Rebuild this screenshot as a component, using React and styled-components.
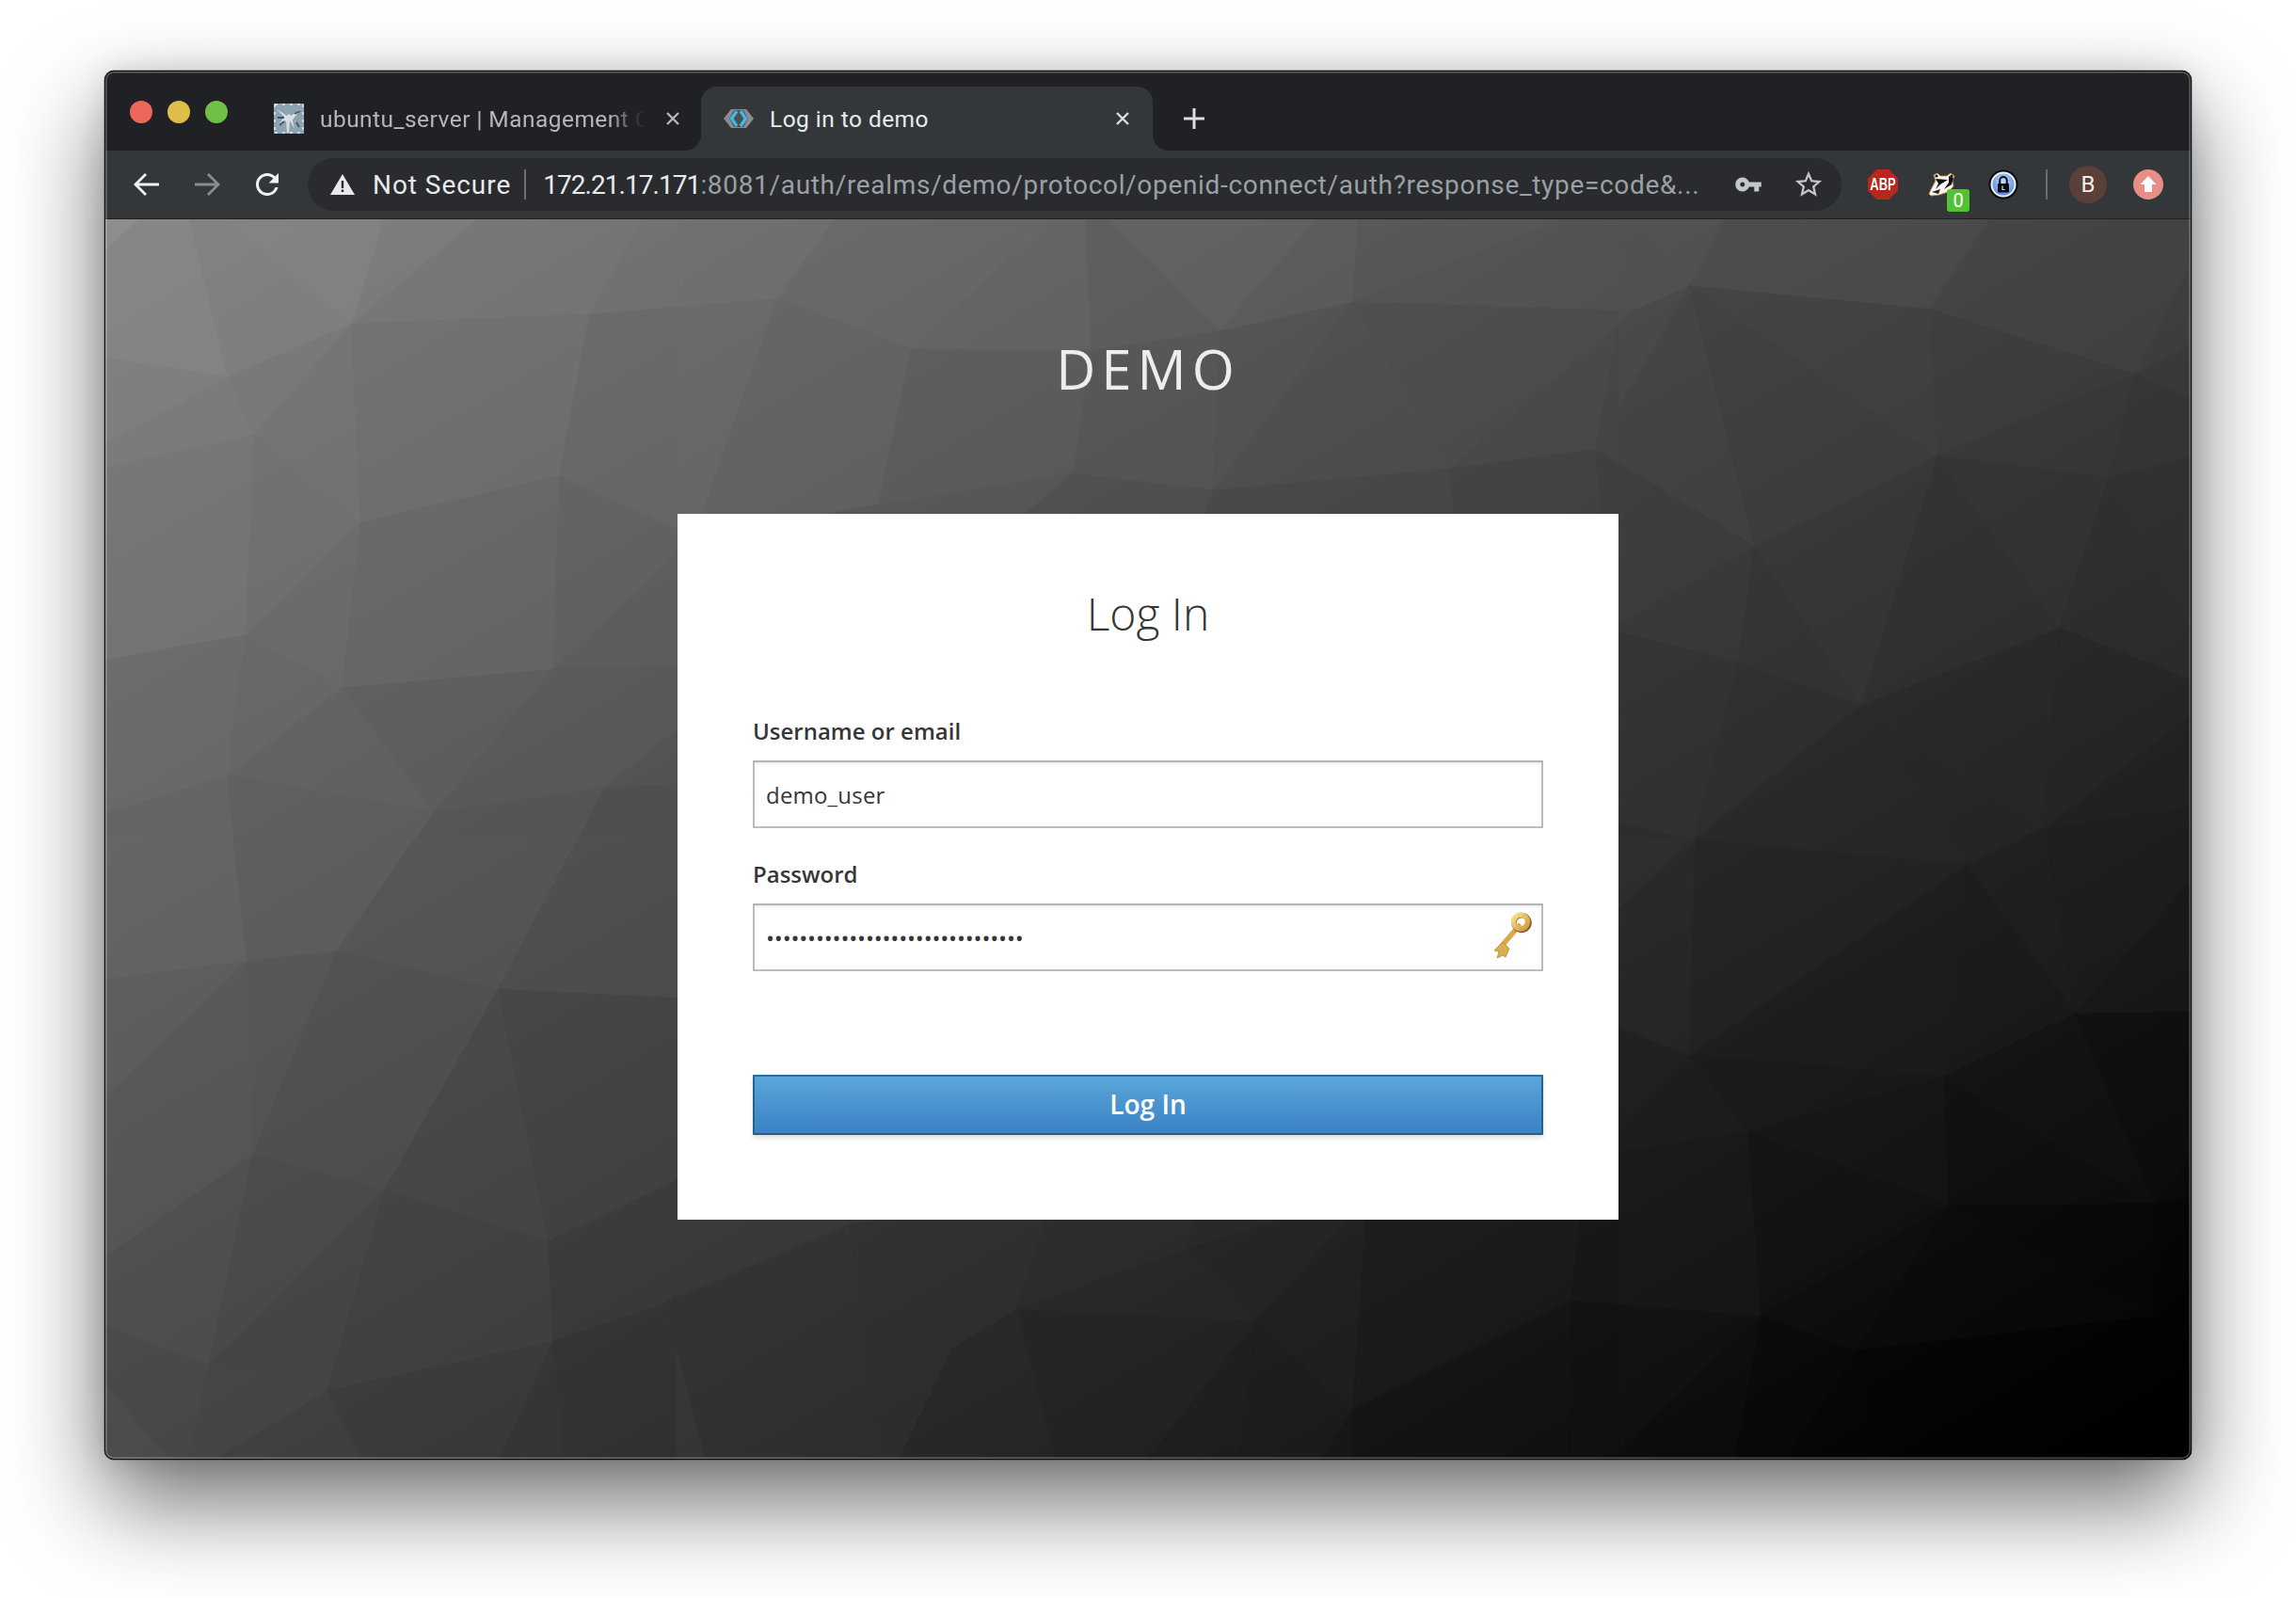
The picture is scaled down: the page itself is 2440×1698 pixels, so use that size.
import React from 'react';
import styled, { createGlobalStyle } from 'styled-components';

const Global = createGlobalStyle`
  html, body { margin: 0; padding: 0; background: #fff; }
  body { width: 2440px; height: 1698px; overflow: hidden; }
  * { box-sizing: border-box; }
`;

const Page = styled.div`
  width: 2440px;
  height: 1698px;
  padding: 75px 0 0 111px;
  background: #fff;
`;
const Win = styled.div`
  position: relative;
  width: 2218px;
  height: 1476px;
  display: flex;
  flex-direction: column;
  border-radius: 10px;
  background: #202124;
  box-shadow: 0 0 0 0.5px rgba(0,0,0,.5), 0 44px 100px rgba(0,0,0,.58), 0 0 30px rgba(0,0,0,.12);
  &::after {
    content: '';
    position: absolute;
    inset: 0;
    border-radius: 10px;
    border: 1px solid #0c0c0c;
    box-shadow: inset 0 0 0 1.5px rgba(255,255,255,.28);
    pointer-events: none;
    z-index: 5;
  }
`;
const TabStrip = styled.div`
  height: 85px;
  flex: none;
  display: flex;
  padding: 17px 0 0 27px;
  border-radius: 10px 10px 0 0;
  font-family: Roboto, "Liberation Sans", sans-serif;
  font-size: 24.5px;
`;
const Lights = styled.div`
  display: flex;
  gap: 16px;
  margin-right: 23px;
  padding-top: 15px;
`;
const Light = styled.span`
  width: 24px;
  height: 24px;
  border-radius: 50%;
  background: ${p => p.$c};
`;
const Tab = styled.div`
  position: relative;
  width: 480px;
  height: 68px;
  display: flex;
  align-items: center;
  gap: 17px;
  padding: 0 ${p => (p.$active ? 20 : 18)}px 0 ${p => (p.$active ? 24 : 26)}px;
  border-radius: 16px 16px 0 0;
  color: ${p => (p.$active ? '#e8eaed' : '#b4b7bb')};
  background: ${p => (p.$active ? '#33373a' : 'transparent')};
  ${p => p.$active && `
    &::before, &::after {
      content: '';
      position: absolute;
      bottom: 0;
      width: 16px;
      height: 16px;
    }
    &::before { left: -16px; background: radial-gradient(circle at 0 0, transparent 15.5px, #33373a 16px); }
    &::after { right: -16px; background: radial-gradient(circle at 100% 0, transparent 15.5px, #33373a 16px); }
  `}
`;
const TabTitle = styled.div`
  flex: 1;
  min-width: 0;
  white-space: nowrap;
  letter-spacing: 0.45px;
  ${p => p.$fade && `mask-image: linear-gradient(to right, #000 89%, rgba(0,0,0,.25) 96%, transparent 100%);`}
`;
const Favicon = styled.svg`
  flex: none;
  width: 32px;
  height: 32px;
`;
const CloseIcon = styled.svg`
  flex: none;
  width: 24px;
  height: 24px;
`;
const NewTab = styled.svg`
  flex: none;
  width: 32px;
  height: 32px;
  margin: 18px 0 0 28px;
`;
const Toolbar = styled.div`
  height: 73px;
  flex: none;
  display: flex;
  align-items: center;
  padding-left: 27px;
  background: #33373a;
  border-bottom: 1px solid #1d1f21;
  font-family: Roboto, "Liberation Sans", sans-serif;
`;
const NavGroup = styled.div`
  display: flex;
  align-items: center;
  gap: 28px;
`;
const NavIcon = styled.svg`
  width: 36px;
  height: 36px;
  flex: none;
`;
const Omnibox = styled.div`
  margin-left: 25px;
  width: 1630px;
  height: 56px;
  flex: none;
  display: flex;
  align-items: center;
  padding: 0 18px 0 24px;
  border-radius: 28px;
  background: #292b2e;
  font-size: 28px;
`;
const WarnIcon = styled.svg`
  width: 26px;
  height: 22px;
  flex: none;
`;
const Security = styled.span`
  margin-left: 19px;
  color: #e8eaed;
  white-space: nowrap;
  letter-spacing: 0.95px;
`;
const UrlDivider = styled.span`
  width: 2px;
  height: 32px;
  margin: 0 18px 0 14px;
  background: #6a6d70;
  flex: none;
`;
const Url = styled.div`
  flex: 1;
  min-width: 0;
  white-space: nowrap;
  color: #9aa0a6;
  letter-spacing: 0.68px;
`;
const Host = styled.span`
  color: #e8eaed;
  letter-spacing: -0.95px;
`;
const OmniIcon = styled.svg`
  width: ${p => p.$s}px;
  height: ${p => p.$s}px;
  margin-left: ${p => p.$ml}px;
  flex: none;
  fill: #c4c7ca;
`;
const Exts = styled.div`
  display: flex;
  align-items: center;
  margin-left: 28px;
`;
const ExtSlot = styled.div`
  position: relative;
  width: 32px;
  height: 32px;
  margin-right: 32px;
  flex: none;
  display: flex;
  align-items: center;
  justify-content: center;
`;
const AbpLabel = styled.span`
  position: absolute;
  inset: 0;
  display: flex;
  align-items: center;
  justify-content: center;
  color: #fff;
  font: bold 18px/1 "Liberation Sans", sans-serif;
  transform: scaleX(.72);
`;
const Count = styled.span`
  position: absolute;
  left: 20px;
  top: 21px;
  width: 24px;
  height: 24px;
  border-radius: 3px;
  background: #52c234;
  color: #fff;
  font-size: 20px;
  line-height: 25px;
  text-align: center;
`;
const ToolDivider = styled.span`
  width: 2px;
  height: 32px;
  margin: 0 23px 0 -3px;
  background: #6a6d70;
  flex: none;
`;
const Avatar = styled.span`
  width: 40px;
  height: 40px;
  border-radius: 50%;
  margin-right: 28px;
  background: #5b4037;
  color: #f1ece9;
  font-size: 24px;
  display: flex;
  align-items: center;
  justify-content: center;
  flex: none;
`;
const Update = styled.svg`
  width: 32px;
  height: 32px;
  flex: none;
`;
const Viewport = styled.div`
  position: relative;
  flex: 1;
  min-height: 0;
  display: flex;
  flex-direction: column;
  align-items: center;
  overflow: hidden;
  background: #333;
  border-radius: 0 0 10px 10px;
  font-family: "Open Sans", "Liberation Sans", sans-serif;
`;
const Backdrop = styled.svg`
  position: absolute;
  inset: 0;
  width: 100%;
  height: 100%;
`;
const Realm = styled.div`
  position: relative;
  height: 313px;
  padding-top: 119px;
  font-size: 58px;
  line-height: 80px;
  letter-spacing: 6px;
  color: #ededed;
  text-transform: uppercase;
`;
const Card = styled.div`
  position: relative;
  width: 1000px;
  height: 750px;
  padding: 73px 80px 0;
  background: #fff;
`;
const Title = styled.h1`
  margin: 0 0 75px;
  font-size: 48px;
  font-weight: 300;
  line-height: 66px;
  text-align: center;
  color: #363636;
`;
const Field = styled.div`
  position: relative;
  display: flex;
  flex-direction: column;
  margin-bottom: 32px;
`;
const Label = styled.label`
  font-size: 24px;
  font-weight: 600;
  line-height: 34px;
  margin-bottom: 14px;
  color: #363636;
`;
const Input = styled.input`
  width: 840px;
  height: 72px;
  padding: 0 12px;
  border: 2px solid #bbb;
  border-top-color: #b5b5b5;
  background: #fff;
  box-shadow: inset 0 2px 2px rgba(3,3,3,.06);
  font-family: "Open Sans", sans-serif;
  font-size: 24px;
  letter-spacing: ${p => (p.type === 'password' ? '-0.2px' : '0.2px')};
  color: #363636;
  outline: none;
`;
const KeyArt = styled.svg`
  position: absolute;
  right: 12px;
  bottom: 11px;
  width: 42px;
  height: 52px;
`;
const Submit = styled.button`
  display: block;
  width: 840px;
  height: 64px;
  margin-top: 110px;
  padding: 0 0 2px;
  border: 2px solid #27628f;
  border-top-color: #2c6aa0;
  border-bottom-color: #265e94;
  border-radius: 1px;
  background: linear-gradient(to bottom, #5ba6d9 0%, #3a82c4 100%);
  box-shadow: 0 3px 5px rgba(3,3,3,.14);
  color: #fff;
  font-family: "Open Sans", sans-serif;
  font-size: 28px;
  font-weight: 600;
`;

const regions = [
  { x: 111, y: 233, w: 610, h: 660, zw: 1568, zh: 1568, polys: [
    ['0,0 95,0 0,80','#8f8f8f'],['95,0 232,0 338,398 0,350 0,80','#858585'],['232,0 330,0 675,265 338,398','#7e7e7e'],['330,0 765,0 675,265','#828282'],['765,0 1020,0 675,265','#7a7a7a'],['1020,0 1470,0 1325,240 675,265','#737373'],['1470,0 1568,0 1568,222 1325,240','#6e6e6e'],['0,350 338,398 0,570','#7e7e7e'],['0,570 338,398 410,545 0,628','#797979'],['338,398 675,265 410,545','#767676'],['675,265 700,765 410,545','#717171'],['675,265 1325,240 1243,648 700,765','#6c6c6c'],['1325,240 1568,222 1568,785 1243,648','#656565'],['0,628 410,545 385,1050 0,1112','#747474'],['410,545 700,765 385,1050','#6f6f6f'],['700,765 650,1183 385,1050','#696969'],['700,765 1243,648 1225,1137 650,1183','#646464'],['1243,648 1568,785 1568,840 1225,1137','#5e5e5e'],['1568,840 1568,1125 1225,1137','#5a5a5a'],['0,1112 385,1050 335,1405 0,1500','#6a6a6a'],['385,1050 650,1183 335,1405','#666666'],['650,1183 900,1497 335,1405','#606060'],['650,1183 1225,1137 900,1497','#5b5b5b'],['1225,1137 1568,1125 1568,1285 1365,1435 900,1497','#565656'],['1568,1285 1568,1425 1365,1435','#505050'],['0,1500 335,1405 355,1568 0,1568','#636363'],['335,1405 900,1497 850,1568 355,1568','#5c5c5c'],['900,1497 1365,1435 1295,1568 850,1568','#525252'],['1365,1435 1568,1425 1568,1568 1295,1568','#4a4a4a'],
  ]},
  { x: 111, y: 890, w: 610, h: 660, zw: 1568, zh: 1568, polys: [
    ['0,0 352,0 390,312 0,358','#646464'],['352,0 850,0 635,287 390,312','#5c5c5c'],['850,0 1295,0 1075,383 635,287','#535353'],['1295,0 1568,0 1568,405 1075,383','#4b4b4b'],['0,358 390,312 0,655','#5e5e5e'],['0,655 390,312 405,800 0,1060','#575757'],['390,312 635,287 405,800','#555555'],['635,287 1075,383 765,890 405,800','#4e4e4e'],['1075,383 1213,1020 765,890','#454545'],['1075,383 1568,405 1568,862 1213,1020','#404040'],['0,1060 405,800 285,1332 0,1235','#505050'],['405,800 765,890 285,1332','#494949'],['765,890 610,1397 285,1332','#454545'],['765,890 1213,1020 1225,1272 610,1397','#3f3f3f'],['1213,1020 1568,862 1568,1150 1525,1178 1225,1272','#383838'],['1525,1178 1568,1150 1568,1300','#2e2e2e'],['0,1235 285,1332 228,1568 175,1568 0,1380','#4a4a4a'],['0,1380 175,1568 0,1568','#505050'],['285,1332 610,1397 310,1568 228,1568','#464646'],['610,1397 705,1568 310,1568','#3f3f3f'],['610,1397 1225,1272 1080,1568 705,1568','#393939'],['1225,1272 1255,1568 1080,1568','#333333'],['1225,1272 1525,1178 1568,1300 1568,1568 1255,1568','#303030'],
  ]},
  { x: 1720, y: 233, w: 610, h: 660, zw: 1568, zh: 1568, polys: [
    ['0,0 60,0 195,168 45,230 0,228','#4e4e4e'],['60,0 285,0 195,168','#505050'],['285,0 1015,0 850,227 195,168','#4a4a4a'],['1015,0 1568,0 1568,125 1410,390 850,227','#424242'],['1568,110 1568,315 1410,390','#3c3c3c'],['0,228 45,230 0,265','#4a4a4a'],['45,230 195,168 0,480 0,265','#444444'],['195,168 372,827 0,615 0,480','#3e3e3e'],['195,168 872,597 372,827','#393939'],['195,168 850,227 872,597','#3d3d3d'],['850,227 1410,390 872,597','#393939'],['1410,390 1345,652 872,597','#343434'],['1410,390 1568,315 1568,455','#363636'],['1410,390 1568,455 1568,600 1340,652','#313131'],['0,615 372,827 0,1022','#373737'],['0,1022 372,827 327,1120 0,1042','#343434'],['372,827 662,1228 327,1120','#2f2f2f'],['372,827 872,597 662,1228','#333333'],['872,597 1205,1032 662,1228','#2d2d2d'],['872,597 1340,652 1205,1032','#303030'],['1340,652 1568,1040 1568,1165 1205,1032','#2a2a2a'],['1340,652 1568,600 1568,1040','#2c2c2c'],['0,1042 327,1120 205,1568 0,1525','#2e2e2e'],['0,1525 205,1568 0,1568','#282828'],['327,1120 662,1228 205,1568','#2a2a2a'],['205,1568 662,1228 910,1568','#252525'],['662,1228 1160,1540 1080,1568 910,1568','#222222'],['662,1228 1205,1032 1160,1540','#252525'],['1205,1032 1568,1165 1568,1250 1160,1540','#222222'],['1568,1250 1568,1485 1160,1540','#1e1e1e'],['1160,1540 1568,1485 1568,1568 1080,1568','#1b1b1b'],
  ]},
  { x: 1720, y: 890, w: 610, h: 660, zw: 1568, zh: 1568, polys: [
    ['0,0 210,5 0,180','#2b2b2b'],['210,0 900,0 950,68 210,5','#252525'],['900,0 1110,0 950,68','#222222'],['1110,0 1170,0 1248,445 950,68','#1c1c1c'],['1170,0 1568,0 1568,105 1248,445','#1a1a1a'],['1568,105 1568,440 1248,445','#151515'],['950,68 1248,445 890,603','#171717'],['950,68 890,603 190,550','#191919'],['210,5 950,68 190,550','#202020'],['0,180 210,5 190,550 0,480','#242424'],['0,480 190,550 0,730','#1c1c1c'],['0,730 190,550 355,743 0,795','#191919'],['190,550 890,603 355,743','#151515'],['355,743 890,603 903,928','#131313'],['890,603 1465,925 903,928','#0c0c0c'],['890,603 1248,445 1465,925','#0f0f0f'],['1248,445 1568,440 1568,805 1465,925','#0b0b0b'],['1465,925 1568,805 1568,905','#070707'],['0,795 355,743 390,1208 0,1180','#151515'],['355,743 903,928 390,1208','#0f0f0f'],['903,928 650,1295 390,1208','#0a0a0a'],['903,928 1465,1208 650,1295','#070707'],['903,928 1465,925 1465,1208','#050505'],['1465,925 1568,905 1568,1125 1465,1208','#030303'],['1465,1208 1568,1125 1568,1568 1405,1568','#000000'],['650,1295 1465,1208 1405,1568 690,1568','#000000'],['650,1295 690,1568 455,1568','#030303'],['390,1208 650,1295 455,1568 315,1568','#060606'],['0,1180 390,1208 0,1545','#101010'],['0,1545 390,1208 315,1568 0,1568','#0b0b0b'],
  ]},
  { x: 720, y: 233, w: 1000, h: 315, zw: 1568, zh: 939, polys: [
    ['0,0 262,0 167,252 0,280','#6c6c6c'],['262,0 625,0 390,412 167,252','#656565'],['625,0 680,0 690,415 390,412','#616161'],['680,0 720,0 905,355 690,415','#5a5a5a'],['720,0 1065,0 905,355','#5f5f5f'],['1065,0 1135,0 1125,262 905,355','#5a5a5a'],['1135,0 1480,0 1125,262','#535353'],['1480,0 1568,0 1568,290 1125,262','#4f4f4f'],['0,280 167,252 40,939 0,939','#666666'],['167,252 390,412 335,905 232,939 40,939','#5f5f5f'],['390,412 690,415 660,805 335,905','#585858'],['690,415 905,355 893,858 660,805','#525252'],['905,355 1125,262 893,858','#4e4e4e'],['1125,262 1287,790 893,858','#4a4a4a'],['1125,262 1568,290 1568,340 1287,790','#474747'],['1568,340 1530,730 1287,790','#444444'],['1568,340 1568,780 1530,730','#404040'],['335,905 660,805 575,939 232,939','#535353'],['660,805 893,858 878,939 575,939','#4a4a4a'],['893,858 1287,790 1295,939 878,939','#424242'],['1287,790 1530,730 1540,939 1295,939','#3c3c3c'],['1530,730 1568,780 1568,939 1540,939','#383838'],
  ]},
  { x: 720, y: 1295, w: 1000, h: 255, zw: 1568, zh: 765, polys: [
    ['0,0 340,0 285,20 0,250','#383838'],['285,20 340,0 615,0 565,290 460,412 370,765 335,765','#2e2e2e'],['0,250 285,20 335,765 45,765 0,430','#303030'],['0,430 45,765 0,765','#383838'],['615,0 860,0 850,97 565,290','#2b2b2b'],['860,0 1015,0 850,97','#272727'],['1015,0 1120,0 965,328 850,97','#222222'],['850,97 965,328 565,290','#262626'],['565,290 965,328 785,765 630,765','#212121'],['460,412 565,290 630,765 370,765','#262626'],['965,328 1125,612 1075,765 935,765','#1a1a1a'],['965,328 935,765 785,765','#1c1c1c'],['1120,0 1148,0 1125,612 965,328','#1e1e1e'],['1148,0 1505,0 1490,262 1125,612','#171717'],['1125,612 1490,262 1485,765 1125,765','#101010'],['1125,612 1125,765 1075,765','#141414'],['1505,0 1568,0 1568,275 1490,262','#131313'],['1490,262 1568,275 1568,765 1485,765','#0d0d0d'],
  ]},
];

const CloseGlyph = ({ color }) => (
  <CloseIcon viewBox="0 0 24 24"><path d="M6 6l12 12M18 6L6 18" stroke={color} strokeWidth="2.4" fill="none" /></CloseIcon>
);

export default function App() {
  return (
    <Page>
      <Global />
      <Win>
        <TabStrip>
          <Lights>
            <Light $c="#ef675c" />
            <Light $c="#e0bd49" />
            <Light $c="#70bf47" />
          </Lights>
          <Tab>
            <Favicon viewBox="0 0 32 32">
              <rect width="32" height="32" fill="#8da3b2" />
              <path d="M1 1h30M1 1v30M31 1v30M1 31h30" stroke="#e6ecef" strokeWidth="1.5" strokeDasharray="3 5" />
              <path d="M3 6l11 7 2-2 2 2 11-7-9 11 2 10-5-9-1 13h-2l-1-13-8 5 6-9z" fill="#e4e9ec" opacity=".85" />
              <path d="M4 15h7M22 11l6-3M6 23l5-4M24 20l3 5" stroke="#47535c" strokeWidth="1.8" />
            </Favicon>
            <TabTitle $fade>ubuntu_server | Management C</TabTitle>
            <CloseGlyph color="#b4b7bb" />
          </Tab>
          <Tab $active>
            <Favicon viewBox="0 0 32 32">
              <path d="M8 6h16l8 10-8 10H8L0 16z" fill="#8b8d90" />
              <path d="M11 7h10l5 9-5 9H11l-5-9z" fill="#4a4f53" />
              <path d="M14 8l-5.5 8 5.5 8" stroke="#45b6ea" strokeWidth="3.4" fill="none" />
              <path d="M18 8l5.5 8-5.5 8" stroke="#45b6ea" strokeWidth="3.4" fill="none" />
            </Favicon>
            <TabTitle>Log in to demo</TabTitle>
            <CloseGlyph color="#dcdee1" />
          </Tab>
          <NewTab viewBox="0 0 32 32"><path d="M16 5v22M5 16h22" stroke="#dcdee1" strokeWidth="3" /></NewTab>
        </TabStrip>

        <Toolbar>
          <NavGroup>
            <NavIcon viewBox="0 0 36 36"><path d="M31 18H7M17 7L6 18l11 11" stroke="#f2f3f4" strokeWidth="2.8" fill="none" /></NavIcon>
            <NavIcon viewBox="0 0 36 36"><path d="M5 18h24M19 7l11 11-11 11" stroke="#8a8d90" strokeWidth="2.8" fill="none" /></NavIcon>
            <NavIcon viewBox="0 0 24 24"><path fill="#f2f3f4" d="M17.65 6.35A7.958 7.958 0 0 0 12 4c-4.42 0-7.99 3.58-7.99 8s3.57 8 7.99 8c3.73 0 6.84-2.55 7.73-6h-2.08A5.99 5.99 0 0 1 12 18c-3.31 0-6-2.69-6-6s2.69-6 6-6c1.66 0 3.14.69 4.22 1.78L13 11h7V4l-2.35 2.35z" /></NavIcon>
          </NavGroup>
          <Omnibox>
            <WarnIcon viewBox="0 0 26 22">
              <path d="M13 0L26 22H0z" fill="#e8eaed" />
              <path d="M11.8 7h2.4v8h-2.4zM11.8 16.6h2.4V19h-2.4z" fill="#292b2e" />
            </WarnIcon>
            <Security>Not Secure</Security>
            <UrlDivider />
            <Url><Host>172.21.17.171</Host>:8081/auth/realms/demo/protocol/openid-connect/auth?response_type=code&amp;...</Url>
            <OmniIcon $s={30} $ml={0} viewBox="0 0 24 24"><path d="M12.65 10C11.83 7.67 9.61 6 7 6c-3.31 0-6 2.69-6 6s2.69 6 6 6c2.61 0 4.83-1.67 5.65-4H17v4h4v-4h2v-4H12.65zM7 14c-1.1 0-2-.9-2-2s.9-2 2-2 2 .9 2 2-.9 2-2 2z" /></OmniIcon>
            <OmniIcon $s={34} $ml={32} viewBox="0 0 24 24"><path d="M22 9.24l-7.19-.62L12 2 9.19 8.63 2 9.24l5.46 4.73L5.82 21 12 17.27 18.18 21l-1.63-7.03L22 9.24zM12 15.4l-3.76 2.27 1-4.28-3.32-2.88 4.38-.38L12 6.1l1.71 4.04 4.38.38-3.32 2.88 1 4.28L12 15.4z" /></OmniIcon>
          </Omnibox>
          <Exts>
            <ExtSlot>
              <svg width="32" height="32" viewBox="0 0 32 32"><path d="M9.5 0h13L32 9.5v13L22.5 32h-13L0 22.5v-13z" fill="#b8281c" /></svg>
              <AbpLabel>ABP</AbpLabel>
            </ExtSlot>
            <ExtSlot>
              <svg width="32" height="30" viewBox="0 0 32 30">
                <path d="M1 25C3 20 6 15 8 11L6 5l4-2 3 3h7l4-3 4 3-2 5 1 6-6 6-9 3-9 1z" fill="#f6f6f6" stroke="#d88a2c" strokeWidth=".9" />
                <path d="M8 9l13 1-8 5-5 5 3-6zM22 6l5 2-2 7-8 5 5-7z" fill="#111" />
                <path d="M4 23l9-3-2 5z" fill="#222" />
                <circle cx="9" cy="6" r="1.6" fill="#111" /><circle cx="25" cy="6" r="1.6" fill="#111" />
              </svg>
              <Count>0</Count>
            </ExtSlot>
            <ExtSlot>
              <svg width="32" height="32" viewBox="0 0 32 32">
                <defs>
                  <radialGradient id="lockBlue" cx="50%" cy="35%" r="60%"><stop offset="0" stopColor="#c9dcfa" /><stop offset="1" stopColor="#5c8fe0" /></radialGradient>
                </defs>
                <circle cx="16" cy="16" r="15.5" fill="#0a0a0a" />
                <circle cx="16" cy="16" r="13.5" fill="#eef2f8" />
                <circle cx="16" cy="16" r="11.5" fill="url(#lockBlue)" />
                <path d="M12.2 15v-3.2a3.8 3.8 0 0 1 7.6 0V15" stroke="#111" strokeWidth="2" fill="none" />
                <rect x="10" y="15" width="12" height="9.5" rx="1" fill="#0b0b14" />
                <path d="M15 17.5v4h2.6" stroke="#d6dffb" strokeWidth="1.2" fill="none" />
              </svg>
            </ExtSlot>
            <ToolDivider />
            <Avatar>B</Avatar>
            <Update viewBox="0 0 32 32">
              <circle cx="16" cy="16" r="16" fill="#e58f87" />
              <path d="M16 7l8.5 9H20v8h-8v-8H7.5z" fill="#fff" />
            </Update>
          </Exts>
        </Toolbar>

        <Viewport>
          <Backdrop viewBox="0 0 2218 1318" preserveAspectRatio="none">
            <defs>
              <linearGradient id="sheet" x1="0" y1="0" x2="1" y2="1">
                <stop offset="0" stopColor="#8c8c8c" />
                <stop offset=".5" stopColor="#474747" />
                <stop offset="1" stopColor="#000" />
              </linearGradient>
            </defs>
            <rect width="2218" height="1318" fill="url(#sheet)" />
            <g opacity=".62">
              {regions.map((r, i) => (
                <g key={i} transform={`translate(${r.x - 111} ${r.y - 233}) scale(${r.w / r.zw} ${r.h / r.zh})`}>
                  {r.polys.map(([points, fill], j) => (
                    <polygon key={j} points={points} fill={fill} stroke={fill} strokeWidth="2" strokeLinejoin="round" />
                  ))}
                </g>
              ))}
            </g>
          </Backdrop>
          <Realm>Demo</Realm>
          <Card>
            <Title>Log In</Title>
            <Field>
              <Label>Username or email</Label>
              <Input type="text" readOnly value="demo_user" />
            </Field>
            <Field>
              <Label>Password</Label>
              <Input type="password" readOnly value="xxxxxxxxxxxxxxxxxxxxxxxxxxxxxxx" />
              <KeyArt viewBox="0 0 42 52">
                <defs>
                  <linearGradient id="gold" x1="0" y1="0" x2="1" y2="1"><stop offset="0" stopColor="#f6e08c" /><stop offset="1" stopColor="#cf9c3a" /></linearGradient>
                </defs>
                <path d="M28 15L10 36" stroke="#d7aa4c" strokeWidth="5.5" strokeLinecap="round" fill="none" />
                <path d="M11 32l-9 9 5 1-2 7 6-3 3 2 4-9z" fill="#dcae4e" stroke="#a87a2a" strokeWidth=".7" />
                <circle cx="31" cy="11.5" r="8" fill="none" stroke="#8a5a3a" strokeWidth="5.5" />
                <circle cx="30" cy="10.5" r="7.5" fill="none" stroke="url(#gold)" strokeWidth="5.5" />
              </KeyArt>
            </Field>
            <Submit type="button">Log In</Submit>
          </Card>
        </Viewport>
      </Win>
    </Page>
  );
}
